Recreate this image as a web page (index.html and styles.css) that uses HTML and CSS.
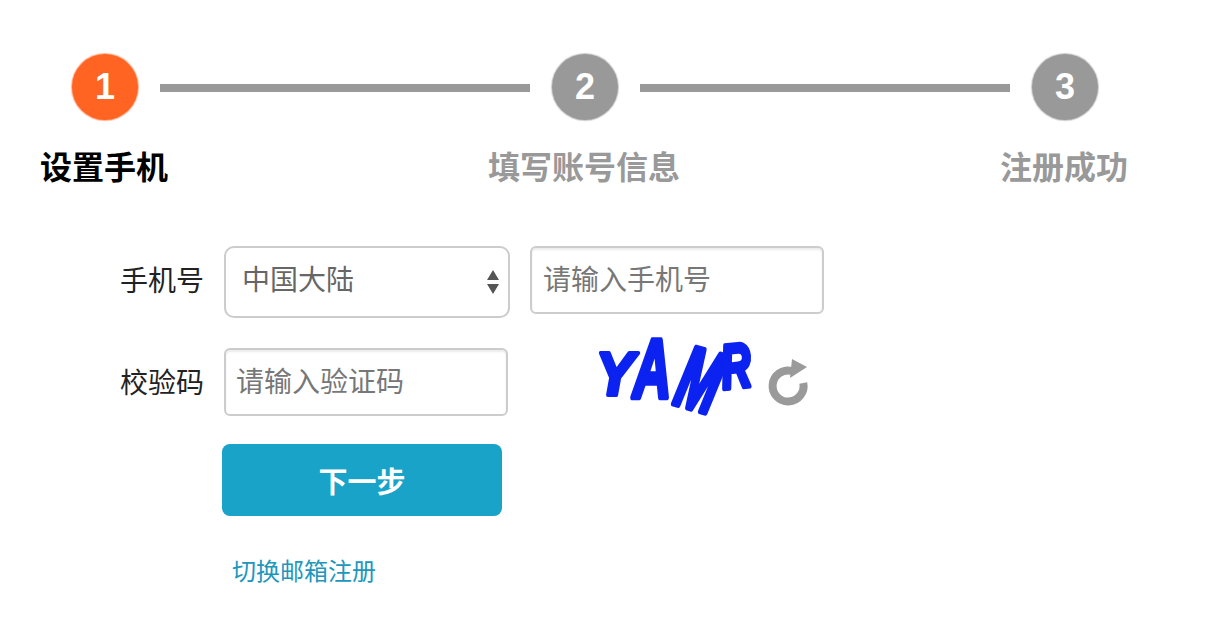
FILE: index.html
```html
<!DOCTYPE html>
<html lang="zh-CN">
<head>
    <meta charset="UTF-8">
    <title>注册</title>
    <link rel="stylesheet" href="styles.css">
</head>
<body>
    <div class="stepper">
        <div class="step-track">
            <div class="step-dot active">1</div>
            <div class="step-line"></div>
            <div class="step-dot">2</div>
            <div class="step-line"></div>
            <div class="step-dot">3</div>
        </div>
        <div class="step-labels">
            <div class="step-label active">设置手机</div>
            <div class="step-label">填写账号信息</div>
            <div class="step-label">注册成功</div>
        </div>
    </div>

    <form class="signup-form">
        <div class="form-row">
            <label class="form-label" for="region">手机号</label>
            <select id="region" class="region-select">
                <option>中国大陆</option>
            </select>
            <input type="text" class="text-input phone-input" placeholder="请输入手机号">
        </div>
        <div class="form-row">
            <label class="form-label" for="code">校验码</label>
            <input type="text" id="code" class="text-input code-input" placeholder="请输入验证码">
            <svg class="captcha" width="172" height="110" viewBox="0 0 172 110">
                <g class="captcha-text">
                    <text font-size="60" transform="translate(9 67) scale(0.95 1.03)">Y</text>
                    <text font-size="62" transform="translate(46 70) scale(0.85 1.35)">A</text>
                    <text font-size="56" transform="translate(85 75) rotate(16) scale(0.88 1.55)">M</text>
                    <text font-size="52" transform="translate(136 61) rotate(-6) scale(0.8 1.2)">R</text>
                </g>
            </svg>
            <svg class="refresh-icon" width="44" height="50" viewBox="0 0 44 50">
                <path d="M26 13 A15.5 15.5 0 1 0 37.3 25" fill="none" stroke="#9a9a9a" stroke-width="8"/>
                <path d="M26 1 L41 9 L24 20 Z" fill="#9a9a9a"/>
            </svg>
        </div>
        <button type="button" class="next-btn">下一步</button>
        <a class="switch-link" href="#">切换邮箱注册</a>
    </form>
</body>
</html>
```

FILE: styles.css
```css
body {
    margin: 0;
    background: #fff;
    font-family: "Liberation Sans", "Noto Sans CJK SC", sans-serif;
    overflow: hidden;
}

/* Steps */
.stepper {
    padding-top: 54px;
}

.step-track {
    display: flex;
    align-items: center;
    padding-left: 72px;
}

.step-dot {
    width: 66px;
    height: 66px;
    border-radius: 50%;
    background: #999;
    box-shadow: 0 0 1px 1px #ccc;
    color: #fff;
    font-size: 36px;
    font-weight: bold;
    line-height: 66px;
    text-align: center;
}

.step-dot.active {
    background: #ff6423;
    box-shadow: 0 0 1px 1px #ffb08f;
}

.step-line {
    width: 370px;
    height: 8px;
    margin: 2px 22px 0;
    background: #999;
}

.step-labels {
    display: flex;
    gap: 270px;
    margin-top: 24px;
    margin-left: -1px;
}

.step-label {
    width: 210px;
    text-align: center;
    font-size: 32px;
    line-height: 48px;
    font-weight: bold;
    color: #999;
    white-space: nowrap;
}

.step-label.active {
    color: #000;
}

/* Form */
.signup-form {
    display: flex;
    flex-direction: column;
    align-items: flex-start;
    margin-top: 54px;
}

.form-row {
    display: flex;
    align-items: flex-start;
    margin-bottom: 30px;
}

.form-label {
    width: 204px;
    margin-right: 20px;
    text-align: right;
    font-size: 28px;
    line-height: 71px;
    color: #222;
}

.text-input,
.region-select {
    box-sizing: border-box;
    border: 2px solid #ccc;
    background-color: #fff;
    font-family: inherit;
    font-size: 28px;
    color: #666;
    outline: none;
}

.text-input {
    height: 68px;
    padding: 2px 11px 0;
    border-radius: 6px;
    box-shadow: inset 0 2px 2px rgba(0, 0, 0, 0.08);
}

.text-input::placeholder {
    color: #777;
    opacity: 1;
}

.region-select {
    width: 286px;
    height: 72px;
    padding: 0 40px 4px 16px;
    border-radius: 10px;
    appearance: none;
    -webkit-appearance: none;
    background-image: url("data:image/svg+xml;charset=UTF-8,%3csvg xmlns='http://www.w3.org/2000/svg' width='12' height='24'%3e%3cpath fill='%23555' d='M6 0l6 10H0zM6 24L0 14h12z'/%3e%3c/svg%3e");
    background-repeat: no-repeat;
    background-position: right 9px center;
}

.phone-input {
    width: 294px;
    margin-left: 20px;
}

.code-input {
    width: 284px;
    padding-left: 10px;
}

.captcha {
    margin: -20px 0 -22px 79px;
    overflow: visible;
}

.captcha-text {
    fill: #0b22f0;
    stroke: #0b22f0;
    stroke-width: 4px;
    stroke-linejoin: round;
    font-family: "Liberation Sans", sans-serif;
    font-weight: bold;
    font-style: italic;
    filter: blur(0.7px);
}

.refresh-icon {
    margin: 10px 0 0 7px;
}

.next-btn {
    width: 280px;
    height: 72px;
    margin: -5px 0 0 222px;
    border: none;
    border-radius: 8px;
    background: #19a3c9;
    color: #fff;
    font-family: inherit;
    font-size: 29px;
    font-weight: bold;
}

.switch-link {
    margin: 38px 0 0 232px;
    font-size: 24px;
    line-height: 36px;
    color: #2196bd;
    text-decoration: none;
}
```
